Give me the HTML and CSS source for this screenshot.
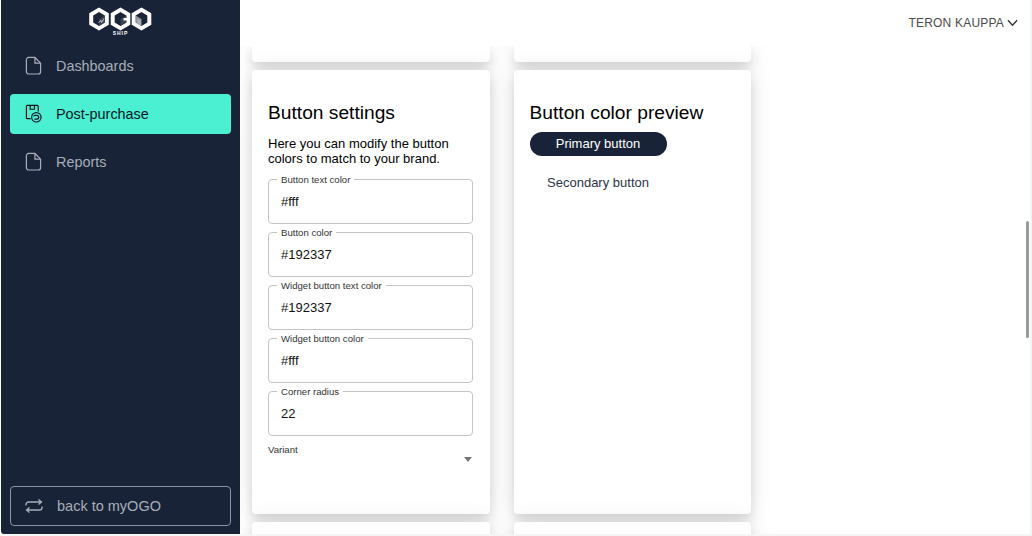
FILE: index.html
```html
<!DOCTYPE html>
<html lang="en">
  <head>
    <meta charset="UTF-8" />
    <meta name="viewport" content="width=device-width, initial-scale=1.0" />
    <title>Post-purchase</title>
    <link rel="stylesheet" href="styles.css">
  </head>
  <body>
    <div class="app">
      <aside class="sidebar">
        <div class="logo">
          <svg width="66" height="24" viewBox="0 0 66 24">
            <g>
              <path class="hex" d="M11 0.5 L20.8 6.2 V17.8 L11 23.5 L1.2 17.8 V6.2 Z" />
              <path class="cube" d="M11 5 L16.8 8.4 V15.6 L11 19 L5.2 15.6 V8.4 Z" />
              <path class="cube-side" d="M11 12 L16.8 8.4 V15.6 L11 19 Z" />
              <path class="cube-mark" d="M10.5 15.5 L13 13.5 L13.5 15.5 L16 11.5" />
            </g>
            <g>
              <path class="hex" d="M32.5 0.5 L42.3 6.2 V17.8 L32.5 23.5 L22.7 17.8 V6.2 Z" />
              <path class="cube" d="M32.5 5 L38.3 8.4 V15.6 L32.5 19 L26.7 15.6 V8.4 Z" />
              <path class="cube-side" d="M32.5 12 L38.3 8.4 V15.6 L32.5 19 Z" />
              <path class="hex" d="M35.5 11 H41 V13.5 H35.5 Z" />
            </g>
            <g>
              <path class="hex" d="M53.5 0.5 L63.3 6.2 V17.8 L53.5 23.5 L43.7 17.8 V6.2 Z" />
              <path class="cube" d="M53.5 5 L59.3 8.4 V15.6 L53.5 19 L47.7 15.6 V8.4 Z" />
              <path class="cube-gray" d="M47.7 8.4 L53.5 12 V19 L47.7 15.6 Z" />
              <path class="cube-mark" d="M50 12 V17 M52 13 V18" />
            </g>
          </svg>
          <span class="logo-sub">SHIP</span>
        </div>

        <nav class="nav">
          <a class="nav-item">
            <svg class="nav-icon" viewBox="0 0 18 20">
              <path d="M4 1.5 H10.5 L16.5 7.5 V16.5 A2.5 2.5 0 0 1 14 19 H4 A2.5 2.5 0 0 1 1.5 16.5 V4 A2.5 2.5 0 0 1 4 1.5 Z M10.5 1.5 V7.5 H16.5" />
            </svg>
            Dashboards
          </a>
          <a class="nav-item active">
            <svg class="nav-icon" viewBox="0 0 18 20">
              <path d="M6 15.5 H2.5 A1 1 0 0 1 1.5 14.5 V2.5 A1 1 0 0 1 2.5 1.5 H13 A1 1 0 0 1 14 2.5 V8 M5.5 1.5 V5.5 H10 V1.5" />
              <circle cx="12" cy="14" r="5" />
              <path d="M10 12 H12.5 A2 2 0 0 1 12.5 16 H10 M10 12 L9 13" />
            </svg>
            Post-purchase
          </a>
          <a class="nav-item">
            <svg class="nav-icon" viewBox="0 0 18 20">
              <path d="M4 1.5 H10.5 L16.5 7.5 V16.5 A2.5 2.5 0 0 1 14 19 H4 A2.5 2.5 0 0 1 1.5 16.5 V4 A2.5 2.5 0 0 1 4 1.5 Z M10.5 1.5 V7.5 H16.5" />
            </svg>
            Reports
          </a>
        </nav>

        <a class="back-link">
          <svg class="back-icon" viewBox="0 0 18 14">
            <path d="M1 6.5 V5.5 A2.5 2.5 0 0 1 3.5 3 H16.5 M13.5 0.5 L16.5 3 L13.5 5.5 M17 7.5 V8.5 A2.5 2.5 0 0 1 14.5 11 H1.5 M4.5 8.5 L1.5 11 L4.5 13.5" />
          </svg>
          back to myOGO
        </a>
      </aside>

      <div class="main">
        <header class="topbar">
          <span class="user-name">Teron Kauppa</span>
          <svg class="chevron" viewBox="0 0 12 8">
            <path d="M1 1 L6 6.5 L11 1" />
          </svg>
        </header>

        <div class="content">
          <div class="card stub-top"></div>
          <div class="card stub-top"></div>

          <section class="card settings">
            <h2>Button settings</h2>
            <p>Here you can modify the button colors to match to your brand.</p>

            <fieldset class="field">
              <legend>Button text color</legend>
              <span>#fff</span>
            </fieldset>
            <fieldset class="field">
              <legend>Button color</legend>
              <span>#192337</span>
            </fieldset>
            <fieldset class="field">
              <legend>Widget button text color</legend>
              <span>#192337</span>
            </fieldset>
            <fieldset class="field">
              <legend>Widget button color</legend>
              <span>#fff</span>
            </fieldset>
            <fieldset class="field">
              <legend>Corner radius</legend>
              <span>22</span>
            </fieldset>

            <div class="select">
              <span class="select-label">Variant</span>
              <span class="select-arrow"></span>
            </div>
          </section>

          <section class="card preview">
            <h2>Button color preview</h2>
            <button class="btn-primary">Primary button</button>
            <button class="btn-secondary">Secondary button</button>
          </section>

          <div class="card stub-bottom"></div>
          <div class="card stub-bottom"></div>
        </div>
      </div>
    </div>

    <div class="scrollbar"></div>
  </body>
</html>
```

FILE: styles.css
```css
html,
body {
  height: 100%;
}

body {
  margin: 0;
  background-color: #f4f5f5;
  color: #000;
  font-family: "Liberation Sans", Arial, sans-serif;
  overflow: hidden;
}

.app {
  display: flex;
  height: 534px;
  margin-right: 2px;
  padding-left: 1px;
  background-color: #fff;
}

/* sidebar */

.sidebar {
  display: flex;
  flex-direction: column;
  flex: none;
  box-sizing: border-box;
  width: 239px;
  padding: 0 9px 8px;
  background-color: #192337;
  border-radius: 0 0 0 3px;
}

.logo {
  position: relative;
  display: flex;
  justify-content: center;
  height: 38px;
  padding-top: 7px;
  box-sizing: border-box;
}

.hex {
  fill: #fff;
}

.cube {
  fill: #1b2436;
}

.cube-side {
  fill: #3a4254;
}

.cube-gray {
  fill: #8d9296;
}

.cube-mark {
  fill: none;
  stroke: #c9ccd0;
  stroke-width: 1;
}

.logo-sub {
  position: absolute;
  top: 30px;
  left: 0;
  right: 0;
  color: #fff;
  font-size: 5px;
  font-weight: bold;
  letter-spacing: 1px;
  text-align: center;
}

.nav {
  display: flex;
  flex-direction: column;
  gap: 8px;
  margin-top: 8px;
}

.nav-item {
  display: flex;
  align-items: center;
  gap: 14px;
  height: 40px;
  padding: 0 0 1px 15px;
  box-sizing: border-box;
  color: #a7aeb9;
  font-size: 14.4px;
  border-radius: 4px;
}

.nav-icon {
  flex: none;
  width: 17px;
  height: 19px;
  fill: none;
  stroke: #a7aeb9;
  stroke-width: 1.3;
}

.nav-item.active {
  background-color: #4bf0d2;
  color: #0d1524;
}

.nav-item.active .nav-icon {
  stroke: #0d1524;
}

.back-link {
  display: flex;
  align-items: center;
  gap: 14px;
  height: 40px;
  margin-top: auto;
  padding-left: 14px;
  box-sizing: border-box;
  border: 1px solid #8c95a3;
  border-radius: 4px;
  color: #a7aeb9;
  font-size: 14.5px;
}

.back-icon {
  flex: none;
  width: 18px;
  height: 14px;
  fill: none;
  stroke: #a7aeb9;
  stroke-width: 1.3;
}

/* main area */

.main {
  flex: 1;
  min-width: 0;
  display: flex;
  flex-direction: column;
}

.topbar {
  position: relative;
  z-index: 2;
  display: flex;
  align-items: center;
  justify-content: flex-end;
  flex: none;
  gap: 3px;
  height: 46px;
  padding-right: 12px;
  background-color: #fff;
  color: #4a4a4a;
  font-size: 12px;
}

.user-name {
  text-transform: uppercase;
  letter-spacing: 0.2px;
}

.chevron {
  width: 11px;
  height: 8px;
  fill: none;
  stroke: #333;
  stroke-width: 1.5;
}

.content {
  flex: 1;
  min-height: 0;
  overflow: hidden;
  display: grid;
  grid-template-columns: 237.5px 237.5px;
  grid-template-rows: 16px 444px 40px;
  gap: 8px 24px;
  padding-left: 12px;
  background-color: #fff;
}

.card {
  background-color: #fff;
  border-radius: 4px;
  box-shadow: 0 6px 12px rgba(0, 0, 0, 0.12), 0 0 24px rgba(0, 0, 0, 0.1);
}

.stub-top {
  border-radius: 0 0 4px 4px;
}

.settings {
  padding: 0 17px 0 16px;
}

.preview {
  padding: 0 16px;
}

h2 {
  margin: 32px 0 0;
  font-size: 19.2px;
  font-weight: normal;
  line-height: 22px;
}

.settings p {
  margin: 12px 0 0;
  font-size: 13px;
  line-height: 15px;
}

.field {
  box-sizing: border-box;
  height: 50px;
  margin: 0 0 3px;
  padding: 0 12px;
  border: 1px solid #c4c4c4;
  border-radius: 4px;
  display: flex;
  align-items: center;
  font-size: 13px;
  color: #111;
}

.settings p + .field {
  margin-top: 8px;
}

.field legend {
  margin-left: -4px;
  padding: 1px 4px 0;
  color: #333;
  font-size: 9.6px;
  line-height: 10px;
}

.field span {
  display: block;
  margin-bottom: 6px;
}

.select {
  display: flex;
  justify-content: space-between;
  margin-top: 8px;
  font-size: 9.6px;
  color: #333;
}

.select-arrow {
  width: 0;
  height: 0;
  margin: 13px 1px 0 0;
  border-left: 4px solid transparent;
  border-right: 4px solid transparent;
  border-top: 5px solid #757575;
}

.btn-primary,
.btn-secondary {
  display: block;
  width: 137px;
  height: 24px;
  padding: 0 0 2px;
  border: none;
  border-radius: 12px;
  font-family: inherit;
  font-size: 13px;
}

.btn-primary {
  margin-top: 8px;
  background-color: #192337;
  color: #fff;
}

.btn-secondary {
  margin-top: 15px;
  background: none;
  color: #2a3346;
}

.scrollbar {
  position: absolute;
  top: 221px;
  left: 1026px;
  width: 3px;
  height: 117px;
  background-color: #999;
  border-radius: 2px;
}
```
